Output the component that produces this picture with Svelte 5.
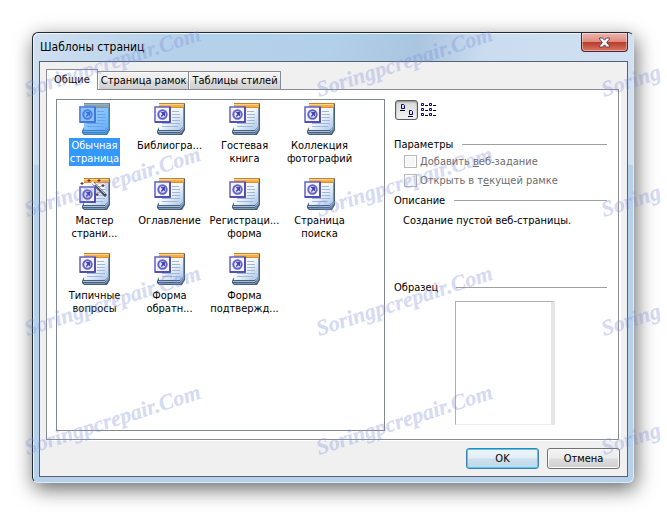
<script lang="ts">
  type Template = { lines: string[]; wizard?: boolean };

  const tabs = ['Общие', 'Страница рамок', 'Таблицы стилей'];

  const templates: Template[] = [
    { lines: ['Обычная', 'страница'] },
    { lines: ['Библиогра...'] },
    { lines: ['Гостевая', 'книга'] },
    { lines: ['Коллекция', 'фотографий'] },
    { lines: ['Мастер', 'страни...'], wizard: true },
    { lines: ['Оглавление'] },
    { lines: ['Регистраци...', 'форма'] },
    { lines: ['Страница', 'поиска'] },
    { lines: ['Типичные', 'вопросы'] },
    { lines: ['Форма', 'обратн...'] },
    { lines: ['Форма', 'подтвержд...'] },
  ];

  // the last column only has room for the start of the name
  const markColumns = [
    { x: 27, text: 'Soringpcrepair.Com' },
    { x: 319, text: 'Soringpcrepair.Com' },
    { x: 604, text: 'Soring' },
  ];
  const markRows = [97, 217, 336, 455];

  let activeTab = $state(0);
  let selected = $state(0);
  let largeIcons = $state(true);
</script>

<main>
  <section class="window" aria-labelledby="title">
    <header class="titlebar">
      <h1 id="title">Шаблоны страниц</h1>
      <button class="close" aria-label="Закрыть">
        <svg width="13" height="11" viewBox="0 0 13 11">
          <path d="M1.5 1h3.200l1.800 2.200L8.300 1h3.200v1L8.600 5.500l2.900 3.400V10H8.300L6.500 7.800 4.700 10H1.500V8.900l2.900-3.400L1.500 2z" fill="#fff" stroke="#5b4a55" />
        </svg>
      </button>
    </header>

    <div class="client">
      <div class="tabs" role="tablist">
        {#each tabs as tab, i}
          <button
            class="tab"
            class:active={activeTab === i}
            role="tab"
            aria-selected={activeTab === i}
            onclick={() => (activeTab = i)}>{tab}</button>
        {/each}
      </div>

      <div class="pane">
        <ul class="templates">
          {#each templates as item, i}
            <li>
              <button class="template" class:selected={selected === i} onclick={() => (selected = i)}>
                <svg class="icon" width="32" height="32" viewBox="0 0 32 32">
                  <path d="M5 0h26v27l-3 5H5l-2-2v-2l2-4z" fill="#46617f" />
                  <path d="M29 5h1v21l-3 4h-1l3-5z" fill="#7b93b0" />
                  <path d="M5 5h24v19l-3 3H5z" fill="url(#paper)" />
                  <path d="M4 28.500h22l3-4" fill="none" stroke="#a9bfd6" />
                  <path d="M5 30.500h21l3-4" fill="none" stroke="#7d98b5" />
                  <path d="M5 0h25v5H5z" fill="#f5ad45" />
                  <path d="M5 1.500h24" stroke="#ffd58c" />
                  <path d="M5 .5h26" stroke="#c58235" />
                  <path d="M5 4.500h25" stroke="#d98d32" />
                  <path d="M18 8.500h7M18 11.500h8M18 14.500h8M18 17.500h8M8 20.500h18M8 23.500h16" stroke="#9cb8da" />
                  {#if item.wizard}
                    <path d="M14 5L27 18" stroke="#45474d" stroke-width="3" />
                    <path d="M13 4l3 3" stroke="#fff" stroke-width="2" />
                    <path d="M16 6l10 10" stroke="#c4c6cc" />
                    <path d="M3 4v3M1.500 5.500h3M10 1v3M8.500 2.500h3M20 1v3M18.500 2.500h3M24 6v3M22.500 7.500h3M18 15v3M16.500 16.500h3" stroke="#593331" />
                  {/if}
                  <g transform={item.wizard ? 'translate(0 5)' : undefined}>
                    <path d="M1 4h15v15H1z" fill="#f4f5ff" stroke="#6660c4" stroke-width="1.500" />
                    <path d="M1 19h15V4" fill="none" stroke="#433ea6" stroke-width="1.500" />
                    <circle cx="8.500" cy="11.500" r="4.200" fill="#e6e7ff" stroke="#6261c4" stroke-width="2" />
                    <path d="M6.500 9h4.500v4.500L9.500 12.200 7.800 14 6.800 13 8.400 11z" fill="#4644ac" />
                  </g>
                  {#if selected === i}
                    <path d="M5 0h26v27l-3 5H5l-2-2v-2l2-4v-4H0V3h5z" fill="#3399ff" opacity=".55" />
                  {/if}
                </svg>
                <span class="label">
                  {#each item.lines as line}<span>{line}</span>{/each}
                </span>
              </button>
            </li>
          {/each}
        </ul>

        <div class="details">
          <div class="views">
            <button class="view" class:pressed={largeIcons} aria-label="Крупные значки" onclick={() => (largeIcons = true)}>
              <svg width="15" height="14" viewBox="0 0 15 14" fill="none" stroke="#000080">
                <path d="M2.500 1.500h2l1 1v3h-3zM10.500 7.500h2l1 1v3h-3z" />
                <path d="M1 7.500h5M9 13.500h5" stroke="#000" />
              </svg>
            </button>
            <button class="view" class:pressed={!largeIcons} aria-label="Список" onclick={() => (largeIcons = false)}>
              <svg width="16" height="14" viewBox="0 0 16 14" fill="none">
                <path d="M.5 .5h2v2h-2zM8.500 .5h2v2h-2zM.5 5.500h2v2h-2zM8.500 5.500h2v2h-2zM.5 10.500h2v2h-2zM8.500 10.500h2v2h-2z" stroke="#000080" />
                <path d="M4 2.500h3M12 2.500h3M4 7.500h3M12 7.500h3M4 12.500h3M12 12.500h3" stroke="#000" />
              </svg>
            </button>
          </div>

          <h2>Параметры</h2>
          <div class="options">
            <label><input type="checkbox" disabled /><span>Добавить <u>в</u>еб-задание</span></label>
            <label><input type="checkbox" disabled /><span>Открыть в т<u>е</u>кущей рамке</span></label>
          </div>

          <h2>Описание</h2>
          <p class="description">Создание пустой веб-страницы.</p>

          <h2 class="wide">Образец</h2>
          <div class="preview"></div>
        </div>
      </div>

      <footer>
        <button class="action default">OK</button>
        <button class="action">Отмена</button>
      </footer>
    </div>
  </section>

  <svg class="watermark" aria-hidden="true">
    <defs>
      <linearGradient id="paper" x1="0" y1="0" x2="1" y2="1">
        <stop offset="0" stop-color="#fff" />
        <stop offset=".5" stop-color="#f1f5fc" />
        <stop offset="1" stop-color="#a9c3e6" />
      </linearGradient>
    </defs>
    {#each markRows as y}
      {#each markColumns as { x, text }}
        <text {x} {y} transform="rotate(-18 {x} {y})">{text}</text>
      {/each}
    {/each}
  </svg>
</main>

<style>
  :global(body) {
    margin: 0;
    background: #fff;
  }

  main {
    position: relative;
    overflow: hidden;
    padding: 32px 33px 33px 32px;
    font: 11px/13px 'DejaVu Sans Condensed', 'DejaVu Sans', sans-serif;
    color: #000;
  }

  button {
    font: inherit;
    color: inherit;
    padding: 0;
  }

  .window {
    border: 1px solid #202a36;
    border-right-color: #dcebf8;
    border-bottom-color: #dcebf8;
    border-radius: 6px;
    padding: 0 5px 5px 6px;
    background: linear-gradient(100deg, #d0e0f1 0, #b5d1ea 22%, #b3d0ea 48%, #a9c5df 62%, #cadcf0 73%, #d2e1f2 100%) 0 0 / 100% 132px no-repeat, #b6d1ea;
    box-shadow: inset 1px 1px #edf6ff, 2px 6px 20px rgba(0, 0, 0, 0.6);
  }

  .titlebar {
    display: flex;
    justify-content: space-between;
    align-items: flex-start;
    height: 28px;
  }

  h1 {
    margin: 0;
    padding: 5px 1px;
    font-size: 12px;
    line-height: 18px;
    font-weight: normal;
  }

  .close {
    display: grid;
    place-items: center;
    width: 47px;
    height: 19px;
    border: 1px solid #53242a;
    border-top: 0;
    border-radius: 0 0 4px 4px;
    background: linear-gradient(#eeb5ac, #df8b80 48%, #b83a29 50%, #d77562);
    box-shadow: inset 0 0 0 1px rgba(255, 255, 255, 0.4);
  }

  .client {
    border: 1px solid #536172;
    background: #f0f0f0;
    padding: 7px 6px;
  }

  .tabs {
    display: flex;
    align-items: flex-end;
  }

  .tab {
    height: 18px;
    padding: 0 2px 0 3px;
    border: 1px solid #898c95;
    border-bottom: 0;
    border-left: 0;
    background: linear-gradient(#f3f3f3, #ebebeb 48%, #dddddd 52%, #d0d0d0);
    box-shadow: inset 1px 1px #fafafa;
  }

  .tab.active {
    position: relative;
    height: 21px;
    margin-bottom: -1px;
    padding: 0 7px 2px;
    border-left: 1px solid #898c95;
    background: #fff;
  }

  .pane {
    display: flex;
    gap: 9px;
    margin-right: 2px;
    padding: 9px 7px 8px 9px;
    border: 1px solid #898c95;
    background: #fff;
    box-shadow: 2px 1px #fff;
  }

  .templates {
    flex: 1;
    display: grid;
    grid-template-columns: repeat(auto-fill, 75px);
    grid-auto-rows: 75px;
    align-content: start;
    min-height: 327px;
    margin: 0;
    padding: 3px 0 0;
    border: 1px solid #828790;
    list-style: none;
  }

  .template {
    display: flex;
    flex-direction: column;
    align-items: center;
    gap: 3px;
    width: 100%;
    border: 0;
    background: none;
  }

  .icon {
    display: block;
  }

  .label {
    padding: 1px;
  }

  .label span {
    display: block;
    white-space: nowrap;
  }

  .selected .label {
    padding: 0;
    border: 1px dotted #c47820;
    background: #3399ff;
    color: #fff;
  }

  .details {
    width: 217px;
  }

  .views {
    display: flex;
    gap: 3px;
    margin: 1px 0 18px 1px;
  }

  .view {
    display: grid;
    place-items: center;
    height: 20px;
    border: 0;
    background: none;
  }

  .view.pressed {
    width: 23px;
    border: 1px solid #5c5c5c;
    border-radius: 3px;
    background: linear-gradient(#d9d9d9, #f3f3f3);
    box-shadow: inset 0 1px 2px #888;
  }

  h2 {
    display: flex;
    align-items: center;
    gap: 9px;
    margin: 0;
    font: inherit;
  }

  h2.wide {
    gap: 18px;
  }

  h2::after {
    content: '';
    flex: 1;
    height: 1px;
    margin-right: 4px;
    background: #a0a0a0;
  }

  .options {
    display: grid;
    gap: 6px;
    padding: 4px 0 7px 10px;
  }

  label {
    display: flex;
    align-items: center;
    gap: 3px;
    color: #6d6d6d;
  }

  input {
    appearance: none;
    width: 13px;
    height: 13px;
    margin: 0;
    border: 1px solid #b8b8b8;
    background: #f6f6f6;
    box-shadow: inset 0 0 0 1px #fff;
  }

  .description {
    min-height: 61px;
    margin: 0;
    padding: 7px 0 6px 9px;
  }

  .preview {
    width: 95px;
    height: 122px;
    margin: 7px auto 0 61px;
    border: 1px solid #b0b0b0;
    border-right: 4px solid #e5e5e5;
    border-bottom-color: #eee;
  }

  footer {
    display: flex;
    justify-content: flex-end;
    gap: 8px;
    padding: 8px 1px 0 0;
  }

  .action {
    width: 73px;
    height: 21px;
    border: 1px solid #707070;
    border-radius: 3px;
    background: linear-gradient(#f3f3f3, #ebebeb 48%, #dddddd 52%, #cfcfcf);
    box-shadow: inset 0 0 0 1px #fafafa;
  }

  .action.default {
    border-color: #3c7fb1;
    background: linear-gradient(#eef5fa, #e1eef7 48%, #cbdfed 52%, #c3d9e9);
    box-shadow: inset 0 0 0 1px #48cdf4;
  }

  .watermark {
    position: absolute;
    inset: 0;
    width: 100%;
    height: 100%;
    pointer-events: none;
  }

  .watermark text {
    font: italic bold 22px 'Liberation Serif', serif;
    fill: rgba(115, 130, 210, 0.28);
    stroke: rgba(150, 180, 240, 0.12);
  }
</style>
